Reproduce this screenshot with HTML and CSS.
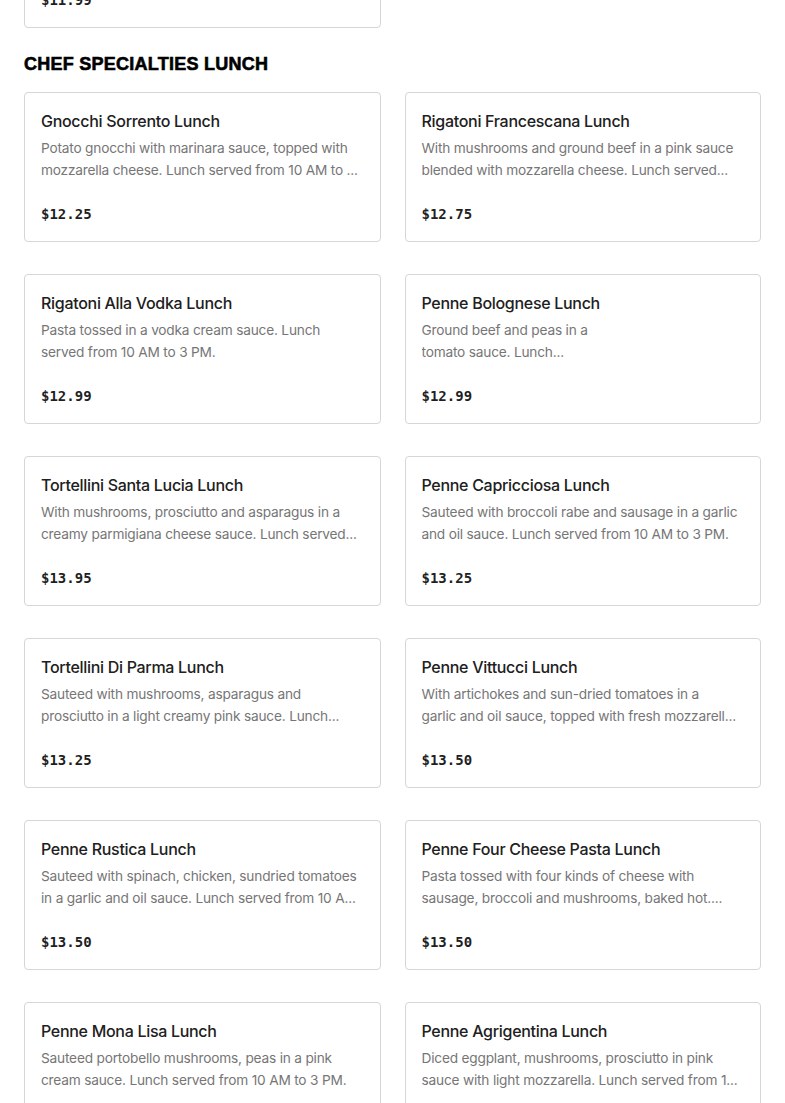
FILE: index.html
```html
<!DOCTYPE html>
<html lang="en">
<head>
<meta charset="utf-8">
<title>Chef Specialties Lunch</title>
<link rel="stylesheet" href="styles.css">
</head>
<body>
<main class="menu">
  <section class="section section-prev">
    <div class="grid">
      <article class="card">
        <h3 class="card-title">Baked Ziti Lunch</h3>
        <p class="card-desc"><span class="desc-line">Ziti baked with tomato sauce and mozzarella</span><span class="desc-line">cheese. Lunch served from 10 AM to 3 PM.</span></p>
        <div class="card-price">$11.99</div>
      </article>
    </div>
  </section>

  <section class="section">
    <h2 class="section-title">CHEF SPECIALTIES LUNCH</h2>
    <div class="grid">
      <article class="card">
        <h3 class="card-title">Gnocchi Sorrento Lunch</h3>
        <p class="card-desc"><span class="desc-line">Potato gnocchi with marinara sauce, topped with</span><span class="desc-line">mozzarella cheese. Lunch served from 10 AM to ...</span></p>
        <div class="card-price">$12.25</div>
      </article>
      <article class="card">
        <h3 class="card-title">Rigatoni Francescana Lunch</h3>
        <p class="card-desc"><span class="desc-line">With mushrooms and ground beef in a pink sauce</span><span class="desc-line">blended with mozzarella cheese. Lunch served...</span></p>
        <div class="card-price">$12.75</div>
      </article>
      <article class="card">
        <h3 class="card-title">Rigatoni Alla Vodka Lunch</h3>
        <p class="card-desc"><span class="desc-line">Pasta tossed in a vodka cream sauce. Lunch</span><span class="desc-line">served from 10 AM to 3 PM.</span></p>
        <div class="card-price">$12.99</div>
      </article>
      <article class="card">
        <h3 class="card-title">Penne Bolognese Lunch</h3>
        <p class="card-desc"><span class="desc-line">Ground beef and peas in a</span><span class="desc-line">tomato sauce. Lunch...</span></p>
        <div class="card-price">$12.99</div>
      </article>
      <article class="card">
        <h3 class="card-title">Tortellini Santa Lucia Lunch</h3>
        <p class="card-desc"><span class="desc-line">With mushrooms, prosciutto and asparagus in a</span><span class="desc-line">creamy parmigiana cheese sauce. Lunch served...</span></p>
        <div class="card-price">$13.95</div>
      </article>
      <article class="card">
        <h3 class="card-title">Penne Capricciosa Lunch</h3>
        <p class="card-desc"><span class="desc-line">Sauteed with broccoli rabe and sausage in a garlic</span><span class="desc-line">and oil sauce. Lunch served from 10 AM to 3 PM.</span></p>
        <div class="card-price">$13.25</div>
      </article>
      <article class="card">
        <h3 class="card-title">Tortellini Di Parma Lunch</h3>
        <p class="card-desc"><span class="desc-line">Sauteed with mushrooms, asparagus and</span><span class="desc-line">prosciutto in a light creamy pink sauce. Lunch...</span></p>
        <div class="card-price">$13.25</div>
      </article>
      <article class="card">
        <h3 class="card-title">Penne Vittucci Lunch</h3>
        <p class="card-desc"><span class="desc-line">With artichokes and sun-dried tomatoes in a</span><span class="desc-line">garlic and oil sauce, topped with fresh mozzarell...</span></p>
        <div class="card-price">$13.50</div>
      </article>
      <article class="card">
        <h3 class="card-title">Penne Rustica Lunch</h3>
        <p class="card-desc"><span class="desc-line">Sauteed with spinach, chicken, sundried tomatoes</span><span class="desc-line">in a garlic and oil sauce. Lunch served from 10 A...</span></p>
        <div class="card-price">$13.50</div>
      </article>
      <article class="card">
        <h3 class="card-title">Penne Four Cheese Pasta Lunch</h3>
        <p class="card-desc"><span class="desc-line">Pasta tossed with four kinds of cheese with</span><span class="desc-line">sausage, broccoli and mushrooms, baked hot....</span></p>
        <div class="card-price">$13.50</div>
      </article>
      <article class="card">
        <h3 class="card-title">Penne Mona Lisa Lunch</h3>
        <p class="card-desc"><span class="desc-line">Sauteed portobello mushrooms, peas in a pink</span><span class="desc-line">cream sauce. Lunch served from 10 AM to 3 PM.</span></p>
        <div class="card-price">$13.50</div>
      </article>
      <article class="card">
        <h3 class="card-title">Penne Agrigentina Lunch</h3>
        <p class="card-desc"><span class="desc-line">Diced eggplant, mushrooms, prosciutto in pink</span><span class="desc-line">sauce with light mozzarella. Lunch served from 1...</span></p>
        <div class="card-price">$13.50</div>
      </article>
    </div>
  </section>
</main>
</body>
</html>
```

FILE: styles.css
```css
* { box-sizing: border-box; }

html, body {
  margin: 0;
  padding: 0;
  background: #ffffff;
}

body {
  font-family: Inter, "Noto Sans", "Liberation Sans", sans-serif;
  color: #1f1f1f;
  overflow: hidden;
}

.menu {
  padding: 0 24px;
  margin-top: -122px;
}

.section-prev {
  margin-bottom: 24px;
}

.section-title {
  margin: 0;
  height: 40px;
  line-height: 24px;
  padding: 0 0 16px 0;
  font-family: "Liberation Sans", Arial, sans-serif;
  font-weight: 700;
  font-size: 18px;
  letter-spacing: 0.25px;
  color: #000000;
  -webkit-text-stroke: 0.6px #000;
}

.grid {
  display: grid;
  grid-template-columns: 1fr 1fr;
  column-gap: 24px;
  row-gap: 32px;
}

.card {
  height: 150px;
  border: 1px solid #d6d6d6;
  border-radius: 4px;
  padding: 16px;
  display: flex;
  flex-direction: column;
  background: #fff;
  min-width: 0;
}

.card-title {
  margin: 0;
  font-size: 16px;
  line-height: 24px;
  font-weight: 500;
  letter-spacing: -0.3px;
  color: #202020;
  white-space: nowrap;
  overflow: hidden;
  text-overflow: ellipsis;
}

.card-desc {
  margin: 4px 0 0 0;
  font-size: 13.7px;
  line-height: 22px;
  height: 44px;
  letter-spacing: -0.2px;
  color: #767676;
}

.desc-line {
  display: block;
  white-space: nowrap;
  overflow: hidden;
  text-overflow: ellipsis;
}

.desc-line:first-child {
  overflow: visible;
}

.card-price {
  margin-top: 23px;
  font-family: "DejaVu Sans Mono", "Liberation Mono", monospace;
  font-weight: 700;
  font-size: 14px;
  line-height: 20px;
  color: #1f1f1f;
}
```
